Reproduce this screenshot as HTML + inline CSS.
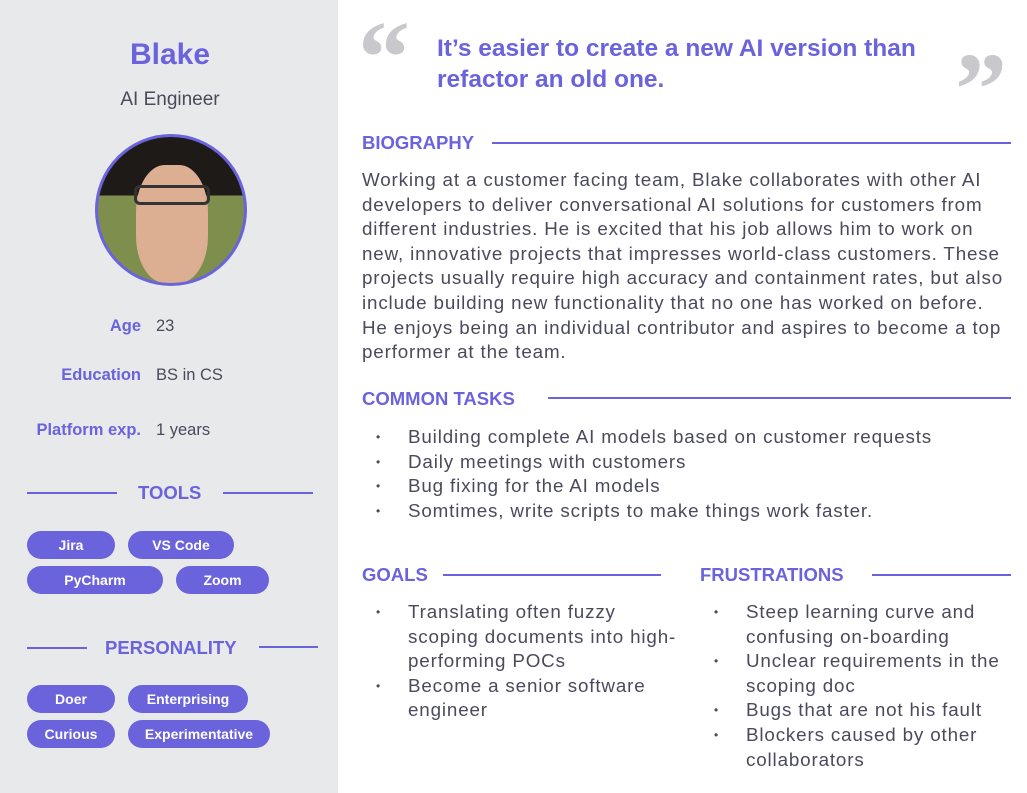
<!DOCTYPE html><html><head><style>
body{margin:0;width:1027px;height:793px;background:#fff;font-family:"Liberation Sans",sans-serif;position:relative;overflow:hidden;color:#4a4a5c}
.a{position:absolute}
.side{left:0;top:0;width:338px;height:793px;background:#e8e9eb}
.p{color:#6b63db}
.pill{position:absolute;height:28px;border-radius:14px;background:#6b63db;color:#fff;font-size:14px;font-weight:bold;text-align:center;line-height:28px}
.ln{position:absolute;height:2px;background:#6b63db}
.h{position:absolute;font-size:18.5px;font-weight:bold;color:#6b63db}
.t{position:absolute;font-size:18.8px;letter-spacing:0.85px;line-height:24.6px;color:#4a4a5c}
ul{margin:0;padding:0;list-style:none}
li{position:relative;padding-left:46px}
li:before{content:"•";position:absolute;left:14px;font-size:12px}
.lab{position:absolute;font-size:16.5px;font-weight:bold;color:#6b63db;text-align:right;width:141px}
.val{position:absolute;font-size:16.5px;color:#4a4a5c}
</style></head><body>
<div class="a side"></div>
<div class="a p" style="left:0;width:340px;top:38px;text-align:center;font-size:30px;font-weight:bold">Blake</div>
<div class="a" style="left:0;width:340px;top:89px;text-align:center;font-size:19px;color:#4a4a5c">AI Engineer</div>
<div class="a" style="left:95px;top:134px;width:146px;height:146px;border-radius:50%;border:3px solid #6b63db;overflow:hidden;background:linear-gradient(#1e1a18 0 40%,#7e8e4c 40% 100%)">
<div class="a" style="left:38px;top:28px;width:72px;height:118px;border-radius:40%;background:#dcae92"></div>
<div class="a" style="left:36px;top:48px;width:76px;height:20px;border:3px solid #333;border-radius:6px;box-sizing:border-box"></div></div>
<div class="lab" style="left:0;top:317px">Age</div><div class="val" style="left:156px;top:317px">23</div>
<div class="lab" style="left:0;top:366px">Education</div><div class="val" style="left:156px;top:366px">BS in CS</div>
<div class="lab" style="left:0;top:421px">Platform exp.</div><div class="val" style="left:156px;top:421px">1 years</div>
<div class="ln" style="left:27px;top:492px;width:90px"></div><div class="ln" style="left:223px;top:492px;width:90px"></div>
<div class="h" style="left:138px;top:482px">TOOLS</div>
<div class="pill" style="left:27px;top:531px;width:88px">Jira</div>
<div class="pill" style="left:128px;top:531px;width:106px">VS Code</div>
<div class="pill" style="left:27px;top:566px;width:136px">PyCharm</div>
<div class="pill" style="left:176px;top:566px;width:93px">Zoom</div>
<div class="ln" style="left:27px;top:647px;width:60px"></div><div class="ln" style="left:259px;top:646px;width:59px"></div>
<div class="h" style="left:105px;top:637px">PERSONALITY</div>
<div class="pill" style="left:27px;top:685px;width:88px">Doer</div>
<div class="pill" style="left:128px;top:685px;width:120px">Enterprising</div>
<div class="pill" style="left:27px;top:720px;width:88px">Curious</div>
<div class="pill" style="left:128px;top:720px;width:142px">Experimentative</div>

<div class="a" style="left:358px;top:8px;font-size:104px;font-family:'Liberation Serif',serif;font-weight:bold;color:#c9c9cd;line-height:100px">“</div>
<div class="a" style="left:955px;top:40px;font-size:104px;font-family:'Liberation Serif',serif;font-weight:bold;color:#c9c9cd;line-height:100px">”</div>
<div class="a p" style="left:437px;top:33px;font-size:24.5px;font-weight:bold;line-height:31px">It’s easier to create a new AI version than<br>refactor an old one.</div>

<div class="h" style="left:362px;top:132px">BIOGRAPHY</div><div class="ln" style="left:492px;top:142px;width:519px"></div>
<div class="t" style="left:362px;top:168px;width:645px">Working at a customer facing team, Blake collaborates with other AI developers to deliver conversational AI solutions for customers from different industries. He is excited that his job allows him to work on new, innovative projects that impresses world-class customers. These projects usually require high accuracy and containment rates, but also include building new functionality that no one has worked on before. He enjoys being an individual contributor and aspires to become a top performer at the team.</div>
<div class="h" style="left:362px;top:388px">COMMON TASKS</div><div class="ln" style="left:548px;top:397px;width:463px"></div>
<ul class="t" style="left:362px;top:425px;width:660px"><li>Building complete AI models based on customer requests</li><li>Daily meetings with customers</li><li>Bug fixing for the AI models</li><li>Somtimes, write scripts to make things work faster.</li></ul>
<div class="h" style="left:362px;top:564px">GOALS</div><div class="ln" style="left:443px;top:574px;width:218px"></div>
<ul class="t" style="left:362px;top:600px;width:330px"><li>Translating often fuzzy scoping documents into high-performing POCs</li><li>Become a senior software engineer</li></ul>
<div class="h" style="left:700px;top:564px">FRUSTRATIONS</div><div class="ln" style="left:872px;top:574px;width:139px"></div>
<ul class="t" style="left:700px;top:600px;width:320px"><li>Steep learning curve and confusing on-boarding</li><li>Unclear requirements in the scoping doc</li><li>Bugs that are not his fault</li><li>Blockers caused by other collaborators</li></ul>
</body></html>
